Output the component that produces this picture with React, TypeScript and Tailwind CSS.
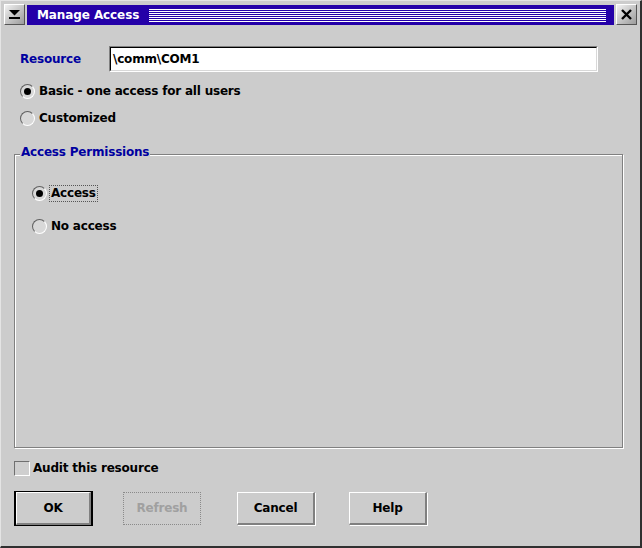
import React from 'react';

const Radio: React.FC<{ checked?: boolean }> = ({ checked }) => (
  <span className="w-[15px] h-[15px] rounded-full border border-t-[#606060] border-l-[#606060] border-b-white border-r-white bg-[#d8d8d8] flex items-center justify-center shrink-0">
    {checked && <span className="w-[7px] h-[7px] rounded-full bg-black" />}
  </span>
);

const Button: React.FC<{ label: string; isDefault?: boolean; disabled?: boolean; className?: string }> = ({
  label,
  isDefault,
  disabled,
  className = ''
}) => {
  if (disabled) {
    return (
      <div className={`h-[33px] w-[78px] border border-dotted border-[#8a8a8a] flex items-center justify-center text-[#a0a0a0] ${className}`}>
        {label}
      </div>
    );
  }
  const face = (
    <div className="h-[33px] w-[78px] border-t border-l border-white border-r-2 border-b-2 border-r-[#808080] border-b-[#808080] flex items-center justify-center">
      {label}
    </div>
  );
  if (isDefault) {
    return <div className={`border-2 border-black w-[79px] h-[35px] flex items-center justify-center ${className}`}>{face}</div>;
  }
  return <div className={`shadow-[1px_1px_0_#fff] ${className}`}>{face}</div>;
};

export default function App() {
  return (
    <div className="w-[642px] h-[548px] bg-[#cccccc] border-t border-l border-[#e4e4e4] border-r-2 border-b-2 border-r-[#303030] border-b-[#303030] font-['DejaVu_Sans',sans-serif] font-bold text-[12px] leading-[15px] tracking-[-0.2px] text-black">
      {/* title bar */}
      <div className="flex items-end mt-[3px] ml-[3px] h-[21px]">
        <div className="w-[21px] h-[21px] border border-t-white border-l-white border-b-[#555] border-r-[#555] bg-gradient-to-br from-[#f2f2f2] to-[#9c9c9c] flex items-center justify-center">
          <svg width="13" height="11" viewBox="0 0 13 11">
            <path d="M1 1 H12 L6.5 6.5 Z" fill="#000" />
            <rect x="1" y="8" width="11" height="2" fill="#000" />
          </svg>
        </div>
        <div className="ml-[2px] w-[587px] h-[20px] bg-[#2400a8] flex items-center pl-[10px] pr-[8px]">
          <span className="text-white text-[12px] tracking-[-0.1px] whitespace-nowrap">Manage Access</span>
          <div className="flex-1 ml-[10px] flex flex-col gap-px">
            <div className="h-px bg-white" />
            <div className="h-px bg-white" />
            <div className="h-px bg-white" />
            <div className="h-px bg-white" />
            <div className="h-px bg-white" />
            <div className="h-px bg-white" />
            <div className="h-px bg-white" />
          </div>
        </div>
        <div className="ml-[2px] w-[21px] h-[21px] border border-t-white border-l-white border-b-[#555] border-r-[#555] bg-gradient-to-br from-[#f2f2f2] to-[#9c9c9c] flex items-center justify-center">
          <svg width="13" height="13" viewBox="0 0 13 13">
            <path d="M2 2 L11 11 M11 2 L2 11" stroke="#000" strokeWidth="2.4" />
          </svg>
        </div>
      </div>

      {/* resource */}
      <div className="mt-[21px] ml-[19px] flex items-center h-[26px]">
        <span className="w-[89px] text-[#0000a0]">Resource</span>
        <div className="w-[489px] h-[26px] border border-t-[#808080] border-l-[#808080] border-b-white border-r-white">
          <div className="h-full border border-t-black border-l-black border-b-[#d8d8d8] border-r-[#d8d8d8] bg-white flex items-center pl-[2px]">
            \comm\COM1
          </div>
        </div>
      </div>

      <div className="mt-[12px] ml-[19px] flex items-center gap-[4px] h-[15px]">
        <Radio checked />
        <span>Basic - one access for all users</span>
      </div>
      <div className="mt-[12px] ml-[19px] flex items-center gap-[4px] h-[15px]">
        <Radio />
        <span>Customized</span>
      </div>

      {/* group */}
      <div className="relative mt-[28px] ml-[13px] w-[609px] h-[294px] border border-[#808080] shadow-[inset_1px_1px_0_#fff,1px_1px_0_#fff] pt-[30px] pl-[17px]">
        <span className="absolute left-[5px] top-[-10px] px-[1px] bg-[#cccccc] text-[#0000a0]">Access Permissions</span>
        <div className="flex items-center gap-[2px] h-[17px]">
          <Radio checked />
          <span className="border border-dotted border-[#555] px-[1px]">Access</span>
        </div>
        <div className="mt-[16px] flex items-center gap-[4px] h-[17px]">
          <Radio />
          <span>No access</span>
        </div>
      </div>

      {/* audit */}
      <div className="mt-[13px] ml-[13px] flex items-center gap-[3px] h-[15px]">
        <span className="w-[16px] h-[15px] border border-t-[#707070] border-l-[#707070] border-b-white border-r-white bg-[#cfcfcf]" />
        <span>Audit this resource</span>
      </div>

      {/* buttons */}
      <div className="mt-[15px] ml-[13px] flex items-center h-[35px]">
        <Button label="OK" isDefault />
        <Button label="Refresh" disabled className="ml-[30px]" />
        <Button label="Cancel" className="ml-[36px]" />
        <Button label="Help" className="ml-[34px]" />
      </div>
    </div>
  );
}
